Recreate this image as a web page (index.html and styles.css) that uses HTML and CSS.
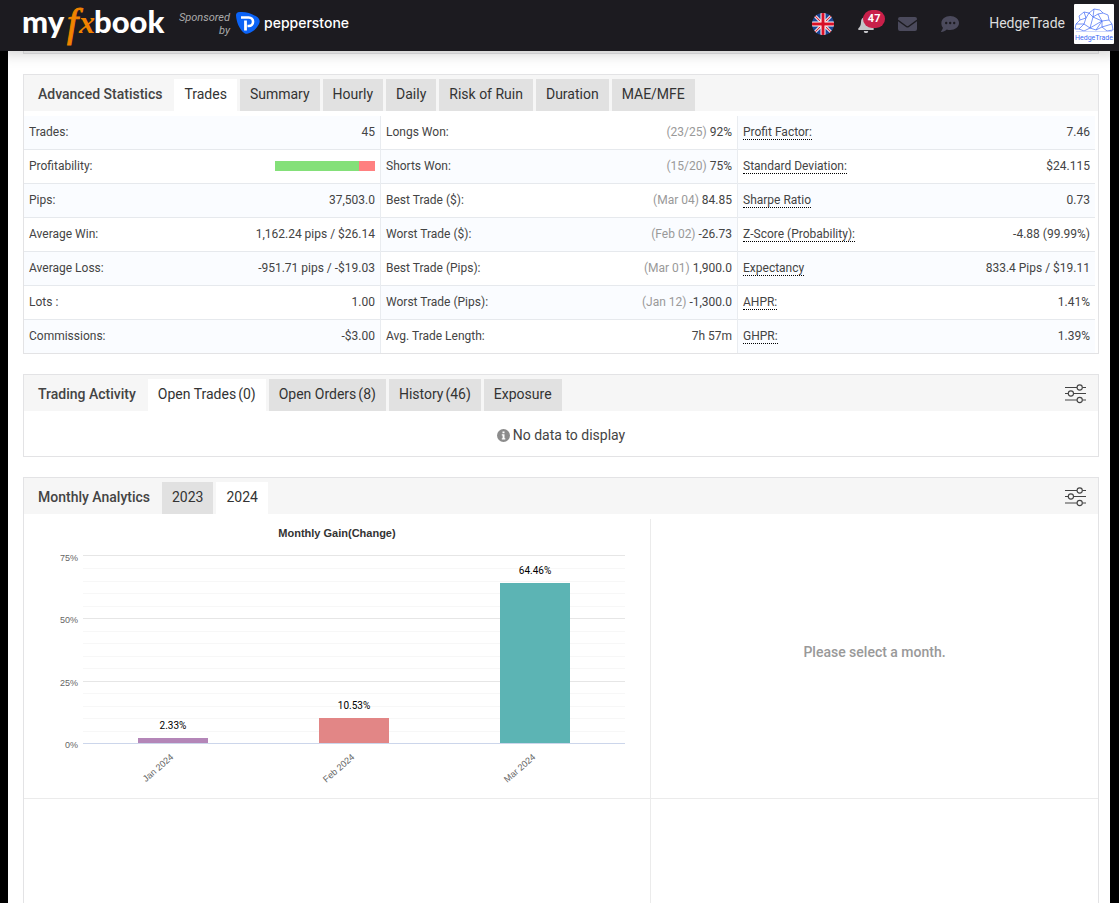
FILE: index.html
```html
<!DOCTYPE html>
<html lang="en">
<head>
<meta charset="utf-8">
<title>Myfxbook - HedgeTrade</title>
<link rel="stylesheet" href="styles.css">
</head>
<body>
<header class="topbar">
  <a class="brand" href="#" aria-label="myfxbook">
    <svg width="145" height="48" viewBox="0 0 145 48">
      <g class="brand-text">
        <text x="-1" y="33">my</text>
        <text x="71" y="33">book</text>
      </g>
      <text class="brand-f" x="44" y="36">f</text>
      <text class="brand-x" x="56" y="33">x</text>
    </svg>
  </a>
  <div class="sponsored">Sponsored<br>by</div>
  <a class="sponsor" href="#">
    <svg width="24" height="22" viewBox="0 0 24 22" aria-hidden="true">
      <path d="M3.500 0C9-.2 15 1 20.500 4.500C23.500 6.500 24.500 9 23 12C20.500 17 16.500 20 12 21.500C10.500 22 9 22 7.500 20.500C3 16.500 .5 10 0 3.500C0 1.200 1.200 0 3.500 0Z" fill="#0b63f6"/>
      <path d="M5 5.500H12.800A4.200 4.200 0 0 1 12.800 14H11.500" fill="none" stroke="#fff" stroke-width="2.600"/>
      <path d="M9.500 8.500V18.500" fill="none" stroke="#fff" stroke-width="2.800"/>
    </svg>
    <span>pepperstone</span>
  </a>
  <nav class="tools" aria-label="Account">
    <button class="tool" type="button" aria-label="Language">
      <svg width="22" height="22" viewBox="0 0 22 22">
        <clipPath id="disc"><circle cx="11" cy="11" r="11"/></clipPath>
        <g clip-path="url(#disc)">
          <rect width="22" height="22" fill="#1b4596"/>
          <path d="M0 0L22 22M22 0L0 22" stroke="#fff" stroke-width="3"/>
          <path d="M0 0L22 22M22 0L0 22" stroke="#d8283a" stroke-width="1.200"/>
          <path d="M11 0V22M0 11H22" stroke="#fff" stroke-width="5"/>
          <path d="M11 0V22M0 11H22" stroke="#d80f27" stroke-width="3"/>
        </g>
      </svg>
    </button>
    <button class="tool bell" type="button" aria-label="Notifications">
      <svg width="16" height="18" viewBox="0 0 16 18">
        <path d="M8 0a1 1 0 0 0-1 1v.8C4.500 2.300 3 4.300 3 7c0 3.500-1.300 5-2.500 6.200C-.3 14 .2 15 1.200 15h13.600c1 0 1.500-1 .7-1.800C14.300 12 13 10.500 13 7c0-2.700-1.500-4.700-4-5.200V1a1 1 0 0 0-1-1ZM5.800 16a2.200 2.200 0 0 0 4.400 0Z" fill="#c4c4c8"/>
      </svg>
      <span class="badge">47</span>
    </button>
    <button class="tool" type="button" aria-label="Messages">
      <svg width="19" height="14" viewBox="0 0 19 14">
        <path d="M2 0H17a2 2 0 0 1 2 2V2.600L10.500 8.800a1.600 1.600 0 0 1-2 0L0 2.600V2A2 2 0 0 1 2 0Z" fill="#4b4a5c"/>
        <path d="M0 4.300L8 10a2.500 2.500 0 0 0 3 0L19 4.300V12a2 2 0 0 1-2 2H2a2 2 0 0 1-2-2Z" fill="#4b4a5c"/>
      </svg>
    </button>
    <button class="tool" type="button" aria-label="Chat">
      <svg width="18" height="16" viewBox="0 0 18 16">
        <path d="M9.200 0C14 0 18 3.100 18 7s-4 7-8.800 7a11 11 0 0 1-3.400-.5C4.200 14.800 2.200 15.800.4 15.900c-.4 0-.5-.4-.3-.7.900-.9 1.600-2.300 1.800-3.500A6.200 6.200 0 0 1 .4 7C.4 3.100 4.400 0 9.200 0Z" fill="#4b4a5c"/>
        <circle cx="5.200" cy="7" r="1.200" fill="#1c1b20"/><circle cx="9.200" cy="7" r="1.200" fill="#1c1b20"/><circle cx="13.200" cy="7" r="1.200" fill="#1c1b20"/>
      </svg>
    </button>
  </nav>
  <a class="account" href="#">
    <span>HedgeTrade</span>
    <svg width="40" height="40" viewBox="0 0 40 40" aria-hidden="true">
      <rect width="40" height="40" rx="1" fill="#fff"/>
      <g fill="none" stroke="#4169f5" stroke-width=".7">
        <path d="M1 25L2 20L6 16L5 12L10 8L15 9L20 5L26 6L29 9L34 11L35 16L38 20L39 26L33 27L28 23L22 26L16 24L10 27L5 25Z"/>
        <path d="M6 16L12 14L15 9L19 13L24 10L29 9M12 14L10 20L16 24L19 13L28 17L35 16M2 20L10 20L5 25M28 17L28 23L38 20M24 10L28 17L22 26M10 8L12 14M19 13L20 5M16 24L28 17"/>
        <path d="M2 27.500H38" stroke="#b9c6fb"/>
      </g>
      <text class="avatar-text" x="20" y="36" text-anchor="middle">HedgeTrade</text>
    </svg>
  </a>
</header>

<main class="page">
  <div class="panel-tail"></div>

  <section class="panel">
    <div class="panel-head">
      <h2>Advanced Statistics</h2>
      <div class="tabs" role="tablist">
        <button class="tab active" type="button" role="tab">Trades</button>
        <button class="tab" type="button" role="tab">Summary</button>
        <button class="tab" type="button" role="tab">Hourly</button>
        <button class="tab" type="button" role="tab">Daily</button>
        <button class="tab" type="button" role="tab">Risk of Ruin</button>
        <button class="tab" type="button" role="tab">Duration</button>
        <button class="tab" type="button" role="tab">MAE/MFE</button>
      </div>
    </div>
    <div class="stats">
      <table class="stat-table odd">
        <tr><th scope="row">Trades:</th><td>45</td></tr>
        <tr><th scope="row">Profitability:</th><td><span class="ratio"><span class="ratio-won" style="width:84%"></span></span></td></tr>
        <tr><th scope="row">Pips:</th><td>37,503.0</td></tr>
        <tr><th scope="row">Average Win:</th><td>1,162.24 pips / $26.14</td></tr>
        <tr><th scope="row">Average Loss:</th><td>-951.71 pips / -$19.03</td></tr>
        <tr><th scope="row">Lots :</th><td>1.00</td></tr>
        <tr><th scope="row">Commissions:</th><td>-$3.00</td></tr>
      </table>
      <table class="stat-table even">
        <tr><th scope="row">Longs Won:</th><td><span class="muted">(23/25)</span> 92%</td></tr>
        <tr><th scope="row">Shorts Won:</th><td><span class="muted">(15/20)</span> 75%</td></tr>
        <tr><th scope="row">Best Trade ($):</th><td><span class="muted">(Mar 04)</span> 84.85</td></tr>
        <tr><th scope="row">Worst Trade ($):</th><td><span class="muted">(Feb 02)</span> -26.73</td></tr>
        <tr><th scope="row">Best Trade (Pips):</th><td><span class="muted">(Mar 01)</span> 1,900.0</td></tr>
        <tr><th scope="row">Worst Trade (Pips):</th><td><span class="muted">(Jan 12)</span> -1,300.0</td></tr>
        <tr><th scope="row">Avg. Trade Length:</th><td>7h 57m</td></tr>
      </table>
      <table class="stat-table odd">
        <tr><th scope="row"><span class="term">Profit Factor:</span></th><td>7.46</td></tr>
        <tr><th scope="row"><span class="term">Standard Deviation:</span></th><td>$24.115</td></tr>
        <tr><th scope="row"><span class="term">Sharpe Ratio</span></th><td>0.73</td></tr>
        <tr><th scope="row"><span class="term">Z-Score (Probability):</span></th><td>-4.88 (99.99%)</td></tr>
        <tr><th scope="row"><span class="term">Expectancy</span></th><td>833.4 Pips / $19.11</td></tr>
        <tr><th scope="row"><span class="term">AHPR:</span></th><td>1.41%</td></tr>
        <tr><th scope="row"><span class="term">GHPR:</span></th><td>1.39%</td></tr>
      </table>
    </div>
  </section>

  <section class="panel">
    <div class="panel-head">
      <h2>Trading Activity</h2>
      <div class="tabs" role="tablist">
        <button class="tab active" type="button" role="tab">Open Trades<span class="count">(0)</span></button>
        <button class="tab" type="button" role="tab">Open Orders<span class="count">(8)</span></button>
        <button class="tab" type="button" role="tab">History<span class="count">(46)</span></button>
        <button class="tab" type="button" role="tab">Exposure</button>
      </div>
      <button class="settings" type="button" aria-label="Activity settings">
        <svg width="21" height="20" viewBox="0 0 21 20" fill="none" stroke="#444" stroke-width="1.100">
          <path d="M0 3.500H12M17.400 3.500H21M0 9.500H3.200M8.600 9.500H21M0 16H12M17.400 16H21"/>
          <circle cx="14.700" cy="3.500" r="2.600"/><circle cx="5.900" cy="9.500" r="2.600"/><circle cx="14.700" cy="16" r="2.600"/>
        </svg>
      </button>
    </div>
    <p class="empty">
      <svg width="13" height="13" viewBox="0 0 13 13" aria-hidden="true">
        <circle cx="6.500" cy="6.500" r="6.500" fill="#8c8c8c"/>
        <path d="M5.500 2.500h2v1.800h-2ZM4.800 5.300h2.700v3.900h.8v1.200H4.800V9.200h.8V6.500h-.8Z" fill="#fff"/>
      </svg>
      <span>No data to display</span>
    </p>
  </section>

  <section class="panel grow">
    <div class="panel-head">
      <h2>Monthly Analytics</h2>
      <div class="tabs" role="tablist">
        <button class="tab" type="button" role="tab">2023</button>
        <button class="tab active" type="button" role="tab">2024</button>
      </div>
      <button class="settings" type="button" aria-label="Analytics settings">
        <svg width="21" height="20" viewBox="0 0 21 20" fill="none" stroke="#444" stroke-width="1.100">
          <path d="M0 3.500H12M17.400 3.500H21M0 9.500H3.200M8.600 9.500H21M0 16H12M17.400 16H21"/>
          <circle cx="14.700" cy="3.500" r="2.600"/><circle cx="5.900" cy="9.500" r="2.600"/><circle cx="14.700" cy="16" r="2.600"/>
        </svg>
      </button>
    </div>
    <div class="analytics">
      <div class="cell left">
        <svg class="chart" width="626" height="279" viewBox="0 0 626 279" role="img" aria-label="Monthly gain">
          <text class="chart-title" x="313" y="18">Monthly Gain(Change)</text>
          <path class="minor" d="M59 49.500H601M59 62.500H601M59 74.500H601M59 87.500H601M59 112.500H601M59 124.500H601M59 137.500H601M59 149.500H601M59 174.500H601M59 187.500H601M59 199.500H601M59 212.500H601"/>
          <path class="major" d="M59 36.500H601M59 99.500H601M59 162.500H601"/>
          <rect x="114" y="219" width="70" height="5" fill="#b486b8"/>
          <rect x="295" y="199" width="70" height="25" fill="#e28686"/>
          <rect x="476" y="64" width="70" height="160" fill="#5cb4b4"/>
          <path class="axis" d="M59 224.500H601"/>
          <g class="scale">
            <text x="54" y="42">75%</text>
            <text x="54" y="104">50%</text>
            <text x="54" y="167">25%</text>
            <text x="54" y="229">0%</text>
          </g>
          <g class="values">
            <text x="149" y="210">2.33%</text>
            <text x="330" y="190">10.53%</text>
            <text x="511" y="55">64.46%</text>
          </g>
          <g class="scale">
            <text transform="translate(150 239) rotate(-41)">Jan 2024</text>
            <text transform="translate(331 239) rotate(-41)">Feb 2024</text>
            <text transform="translate(512 239) rotate(-41)">Mar 2024</text>
          </g>
        </svg>
      </div>
      <div class="cell prompt">Please select a month.</div>
      <div class="cell last left"></div>
      <div class="cell last"></div>
    </div>
  </section>
</main>
</body>
</html>
```
FILE: styles.css
```css
* { box-sizing: border-box; }

body {
  margin: 0;
  height: 100vh;
  overflow: hidden;
  display: flex;
  flex-direction: column;
  background: #000;
  color: #444;
  font: 14px/16px Roboto, "Liberation Sans", sans-serif;
}

button {
  border: 0;
  padding: 0;
  background: none;
  color: inherit;
  font: inherit;
}

a { color: inherit; text-decoration: none; }
svg { display: block; }

/* Top bar */
.topbar {
  z-index: 1;
  flex: none;
  display: flex;
  align-items: center;
  height: 51px;
  padding: 0 5px 3px 23px;
  background: #1c1b20;
  box-shadow: 0 2px 14px rgba(0, 0, 0, .2);
}
.brand svg { overflow: visible; }
.brand-text { fill: #fff; font: 900 31px Lato, sans-serif; }
.brand-f, .brand-x { fill: #f08300; font-family: "Liberation Serif", serif; font-style: italic; }
.brand-f { font-size: 40px; stroke: #f08300; stroke-width: 1; }
.brand-x { font-size: 32px; font-weight: 700; }
.sponsored {
  width: 62px;
  text-align: right;
  color: #aaa;
  font-size: 11px;
  line-height: 13px;
  font-style: italic;
}
.sponsor {
  display: flex;
  align-items: center;
  gap: 4px;
  margin-left: 6px;
  padding-bottom: 2px;
  color: #fff;
  font: 500 14px/20px Inter, sans-serif;
}
.tools {
  display: flex;
  align-items: center;
  gap: 24px;
  margin-left: auto;
}
.tool { display: block; }
.bell { position: relative; }
.badge {
  position: absolute;
  left: 5px;
  top: -5px;
  width: 22px;
  height: 18px;
  border-radius: 9px;
  background: #c9204a;
  color: #fff;
  font-size: 11px;
  font-weight: 700;
  line-height: 17px;
}
.account {
  display: flex;
  align-items: center;
  gap: 9px;
  margin-left: 30px;
  color: #ddd;
}
.account span { padding-bottom: 2px; }
.avatar-text { fill: #4169f5; font: 7px Roboto, sans-serif; }

/* Page */
.page {
  flex: 1;
  min-height: 0;
  display: flex;
  flex-direction: column;
  gap: 20px;
  margin: 0 9px 0 8px;
  padding: 0 11px 0 15px;
  background: #fff;
}
.panel, .panel-tail { flex: none; border: 1px solid #e3e3e5; }
.panel-tail { height: 3px; border-top: 0; background: #f6f6f6; }
.panel.grow {
  flex: 1;
  display: flex;
  flex-direction: column;
  border-bottom: 0;
}
.panel-head {
  display: flex;
  align-items: flex-end;
  height: 36px;
  background: #f6f6f6;
}
.panel-head h2 {
  margin: 0;
  padding: 0 12px 2px 14px;
  font-size: 14px;
  font-weight: 500;
  line-height: 30px;
}
.tabs { display: flex; gap: 3px; }
.tab {
  height: 32px;
  padding: 0 10px 2px;
  background: #e1e1e1;
  color: #333;
}
.tab.active { background: #fff; }
.count { margin-left: 2px; }
.settings { margin: 0 12px 7px auto; }

/* Statistics */
.stats {
  display: grid;
  grid-template-columns: repeat(3, 1fr);
  padding: 5px 3px 0 0;
  font-size: 12px;
}
.stat-table {
  width: 100%;
  border-collapse: separate;
  border-spacing: 0;
  border-right: 1px solid #e9ecf0;
}
.stat-table:last-child { border-right: 0; }
.stat-table th, .stat-table td {
  height: 34px;
  padding: 0 5px 2px;
  border-bottom: 1px solid #e6e9ed;
  font-weight: 400;
  text-align: left;
}
.stat-table td { text-align: right; }
.stat-table tr:last-child > * { height: 33px; border-bottom: 0; }
.odd tr:nth-child(odd), .even tr:nth-child(even) { background: #fafcff; }
.muted { color: #999; }
.term { border-bottom: 1px dotted #000; }
.ratio {
  display: block;
  width: 100px;
  height: 10px;
  margin-left: auto;
  background: #ff8080;
}
.ratio-won { display: block; height: 100%; background: #84e079; }

.empty {
  display: flex;
  align-items: center;
  justify-content: center;
  gap: 3px;
  height: 45px;
  margin: 0;
  padding-top: 3px;
}

/* Monthly analytics */
.analytics {
  flex: 1;
  display: grid;
  grid-template-columns: 627fr 447fr;
  grid-template-rows: auto 1fr;
  padding-top: 5px;
}
.cell { min-width: 0; border-bottom: 1px solid #ebebeb; }
.cell.left { border-right: 1px solid #ebebeb; }
.cell.last { border-bottom: 0; }
.chart { max-width: 100%; }
.prompt {
  display: flex;
  align-items: center;
  justify-content: center;
  padding-bottom: 13px;
  color: #999;
  font-weight: 500;
}
.chart-title { fill: #333; font: 700 11px "Liberation Sans", sans-serif; text-anchor: middle; }
.minor { stroke: #f7f7f7; }
.major { stroke: #e6e6e6; }
.axis { stroke: #ccd6eb; }
.scale { fill: #666; font: 9px "Liberation Sans", sans-serif; text-anchor: end; }
.values { fill: #000; font: 10px Roboto, sans-serif; text-anchor: middle; }
```
